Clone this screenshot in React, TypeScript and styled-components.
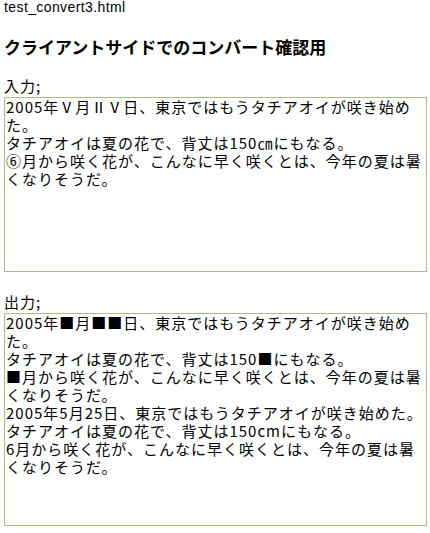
import styled, { createGlobalStyle } from 'styled-components'

const GlobalStyle = createGlobalStyle`
	body {
		margin: 0;
		background: #ffffff;
		color: #000000;
		font-family: 'Noto Sans CJK JP', 'Liberation Sans', sans-serif;
	}
`

const Page = styled.div`
	padding: 0 4px;
`

const FileName = styled.div`
	font-family: 'Liberation Sans', 'Noto Sans CJK JP', sans-serif;
	font-size: 14px;
	letter-spacing: 0.4px;
	line-height: 15px;
`

const Heading = styled.h1`
	margin: 22px 0 0;
	font-size: 17px;
	font-weight: bold;
	line-height: 20px;
`

const Section = styled.section<{ $top: number }>`
	margin-top: ${(p) => p.$top}px;
`

const Label = styled.div`
	font-size: 15px;
	letter-spacing: 1px;
	line-height: 18px;
	margin-bottom: 2px;
`

const TextBox = styled.div<{ $height: number }>`
	box-sizing: border-box;
	width: 423px;
	height: ${(p) => p.$height}px;
	padding: 0 0 0 1px;
	border: 1px solid #a6bf88;
	font-size: 15px;
	letter-spacing: 1px;
	line-height: 18px;
	white-space: pre-wrap;
`

const inputText = [
	'2005年Ⅴ月ⅡⅤ日、東京ではもうタチアオイが咲き始めた。',
	'タチアオイは夏の花で、背丈は150㎝にもなる。',
	'⑥月から咲く花が、こんなに早く咲くとは、今年の夏は暑くなりそうだ。',
]

const outputText = [
	'2005年■月■■日、東京ではもうタチアオイが咲き始めた。',
	'タチアオイは夏の花で、背丈は150■にもなる。',
	'■月から咲く花が、こんなに早く咲くとは、今年の夏は暑くなりそうだ。',
	'2005年5月25日、東京ではもうタチアオイが咲き始めた。',
	'タチアオイは夏の花で、背丈は150cmにもなる。',
	'6月から咲く花が、こんなに早く咲くとは、今年の夏は暑くなりそうだ。',
]

const App = () => {
	return (
		<Page>
			<GlobalStyle />
			<FileName>test_convert3.html</FileName>
			<Heading>クライアントサイドでのコンバート確認用</Heading>
			<Section $top={20}>
				<Label>入力;</Label>
				<TextBox $height={175}>{inputText.join('\n')}</TextBox>
			</Section>
			<Section $top={21}>
				<Label>出力;</Label>
				<TextBox $height={213}>{outputText.join('\n')}</TextBox>
			</Section>
		</Page>
	)
}

export default App
